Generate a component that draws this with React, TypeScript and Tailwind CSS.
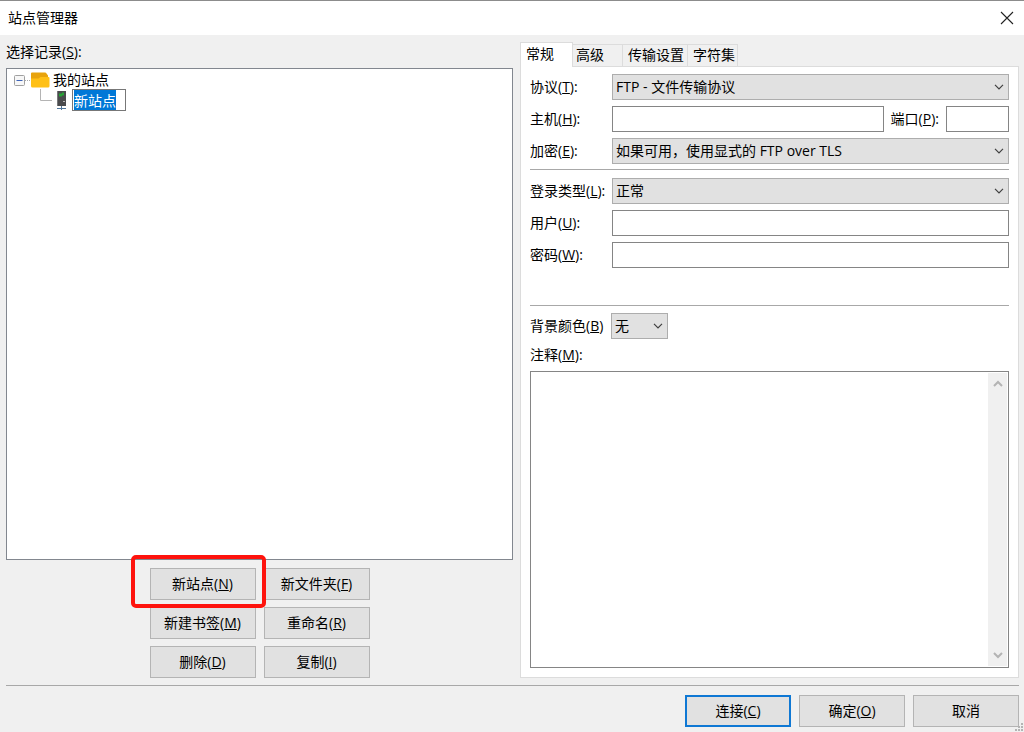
import { useEffect, useRef, useState } from "react";
import type { ReactNode } from "react";

function Key({ text, k, colon = false }: { text: string; k: string; colon?: boolean }) {
  return (
    <>
      {text}(<u className="underline underline-offset-1">{k}</u>){colon ? ":" : ""}
    </>
  );
}

function PushButton({ children, primary = false }: { children: ReactNode; primary?: boolean }) {
  return (
    <button
      type="button"
      className={
        primary
          ? "h-8 w-[106px] border-2 border-[#0f78d4] bg-[#e1e1e1]"
          : "h-8 w-[106px] border border-[#b4b4b4] bg-[#e1e1e1]"
      }
    >
      {children}
    </button>
  );
}

function Combo({ id, options, className }: { id: string; options: string[]; className: string }) {
  return (
    <div className={`relative ${className}`}>
      <select
        id={id}
        className="block h-[26px] w-full appearance-none border border-[#adadad] bg-[#e1e1e1] pl-[3px] leading-5"
      >
        {options.map((o) => (
          <option key={o}>{o}</option>
        ))}
      </select>
      <svg
        viewBox="0 0 10 6"
        className="pointer-events-none absolute top-[10px] right-[5px] h-[6px] w-[10px]"
        fill="none"
        stroke="#404040"
        strokeWidth="1.2"
      >
        <path d="M1 0.8 5 4.8 9 0.8" />
      </svg>
    </div>
  );
}

function Row({ id, label, k, children }: { id: string; label: string; k: string; children: ReactNode }) {
  return (
    <div className="flex h-[26px] items-center">
      <label htmlFor={id} className="w-[82px] shrink-0 pb-px whitespace-nowrap">
        <Key text={label} k={k} colon />
      </label>
      {children}
    </div>
  );
}

const field = "h-[26px] min-w-0 border border-[#858585] bg-white px-1 outline-none";

function SiteTree() {
  const [name, setName] = useState("新站点");
  const edit = useRef<HTMLInputElement>(null);
  useEffect(() => {
    edit.current?.focus();
    edit.current?.select();
  }, []);
  return (
    <div className="flex-1 border border-[#82878f] bg-white" role="tree" aria-label="选择记录">
      <div role="treeitem" aria-expanded="true" className="flex h-5 items-center pl-[7px]">
        <svg viewBox="0 0 17 20" className="h-5 w-[17px] shrink-0" fill="none">
          <rect x="0.5" y="6.5" width="10" height="10" rx="1" fill="#f7f7f7" stroke="#a0a0a0" />
          <path d="M2.5 11.5h6" stroke="#3d63b8" />
          <path d="M11 11.5h6" stroke="#a8a8a8" strokeDasharray="1 1" />
        </svg>
        <svg viewBox="0 0 19 16" className="mt-[2px] h-4 w-[19px] shrink-0">
          <path d="M0 1.5Q0 0.5 1 0.5H14Q15 0.5 15.5 1.5L17 3.5V13H0Z" fill="#e8a30c" />
          <path d="M0 6.5H7.5L9.5 5H17.5Q18.5 5 18.5 6V14Q18.5 15.5 17 15.5H1.5Q0 15.5 0 14Z" fill="#ffc016" />
        </svg>
        <span className="pt-[2px] pl-[3px]">我的站点</span>
      </div>
      <div role="treeitem" className="flex h-[22px] items-center pl-[33px]">
        <svg viewBox="0 0 12 22" className="h-[22px] w-3 shrink-0" fill="none" stroke="#b4b4b4">
          <path d="M0.5 0V11.5H12" />
        </svg>
        <svg viewBox="0 0 12 20" className="ml-[3px] h-5 w-3 shrink-0">
          <rect x="2" y="1" width="9" height="15" fill="#4a4b4d" />
          <rect x="2" y="1" width="1" height="15" fill="#77797b" />
          <path d="M4 3.5h3v-1h2v3h-2v1h-3z" fill="#27a336" />
          <rect x="8" y="11" width="2" height="1" fill="#b8b8b8" />
          <path d="M6.5 16v4M2 18.5h9" stroke="#50779c" />
        </svg>
        <input
          ref={edit}
          aria-label="站点名称"
          value={name}
          onChange={(e) => setName(e.target.value)}
          className="ml-[5px] h-[22px] w-[54px] border border-[#777] bg-white pb-px pl-px leading-5 outline-none selection:bg-[#0078d7] selection:text-white"
        />
      </div>
    </div>
  );
}

const idleTab = "h-[22px] border-t border-r border-[#dcdcdc] bg-[#f0f0f0] pb-px text-left";

function Tabs() {
  return (
    <div role="tablist" className="flex h-6 items-end">
      <button
        type="button"
        role="tab"
        aria-selected="true"
        className="relative -mb-px h-[25px] w-[53px] border border-b-0 border-[#dcdcdc] bg-white pb-[2px] pl-[5px] text-left"
      >
        常规
      </button>
      <button type="button" role="tab" className={`${idleTab} w-[50px] pl-[3px]`}>
        高级
      </button>
      <button type="button" role="tab" className={`${idleTab} w-[65px] pl-[5px]`}>
        传输设置
      </button>
      <button type="button" role="tab" className={`${idleTab} w-[50px] pl-[5px]`}>
        字符集
      </button>
    </div>
  );
}

function ScrollArrow({ down = false }: { down?: boolean }) {
  return (
    <svg viewBox="0 0 10 7" className="h-[7px] w-[10px]" fill="none" stroke="#b4b4b4" strokeWidth="2">
      <path d={down ? "M1 1 5 5 9 1" : "M1 6 5 2 9 6"} />
    </svg>
  );
}

export default function App() {
  return (
    <div className="flex min-h-screen flex-col bg-[#f0f0f0] font-['Open_Sans','Noto_Sans_CJK_SC',sans-serif] text-[14px] leading-5 text-black">
      <header className="flex h-[35px] items-center justify-between border-t border-[#8c8c8c] bg-white pr-[10px] pb-px pl-2">
        <h1>站点管理器</h1>
        <button type="button" aria-label="关闭">
          <svg viewBox="0 0 14 14" className="size-[14px]" fill="none" stroke="#222" strokeWidth="1.1">
            <path d="M1 1 13 13M13 1 1 13" />
          </svg>
        </button>
      </header>

      <main className="flex flex-1 gap-[7px] px-[6px] pt-[7px] pb-[7px] pr-[5px]">
        <section className="flex flex-1 flex-col">
          <p className="h-[26px]">
            <Key text="选择记录" k="S" colon />
          </p>
          <SiteTree />
          <div className="grid grid-cols-[106px_106px] justify-center gap-x-2 gap-y-[7px] pt-2">
            <div className="relative">
              <PushButton>
                <Key text="新站点" k="N" />
              </PushButton>
              <div className="pointer-events-none absolute -top-[13px] -left-[19px] z-10 h-[53px] w-[135px] rounded-[5px] border-4 border-[#fe130d]" />
            </div>
            <PushButton>
              <Key text="新文件夹" k="F" />
            </PushButton>
            <PushButton>
              <Key text="新建书签" k="M" />
            </PushButton>
            <PushButton>
              <Key text="重命名" k="R" />
            </PushButton>
            <PushButton>
              <Key text="删除" k="D" />
            </PushButton>
            <PushButton>
              <Key text="复制" k="I" />
            </PushButton>
          </div>
        </section>

        <section className="flex w-[499px] flex-col">
          <Tabs />
          <div className="flex flex-1 flex-col border border-[#dcdcdc] bg-white px-[9px] pt-[7px] pb-[9px]">
            <div className="flex flex-col gap-[6px]">
              <Row id="protocol" label="协议" k="T">
                <Combo id="protocol" className="flex-1" options={["FTP - 文件传输协议"]} />
              </Row>
              <Row id="host" label="主机" k="H">
                <input id="host" className={`${field} flex-1`} />
                <label htmlFor="port" className="px-[7px] pb-px">
                  <Key text="端口" k="P" colon />
                </label>
                <input id="port" className={`${field} w-[63px]`} />
              </Row>
              <Row id="encryption" label="加密" k="E">
                <Combo id="encryption" className="flex-1" options={["如果可用，使用显式的 FTP over TLS"]} />
              </Row>
            </div>
            <hr className="mt-[5px] mb-2 border-[#a8a8a8]" />
            <div className="flex flex-col gap-[6px]">
              <Row id="logon" label="登录类型" k="L">
                <Combo id="logon" className="flex-1" options={["正常"]} />
              </Row>
              <Row id="user" label="用户" k="U">
                <input id="user" className={`${field} flex-1`} />
              </Row>
              <Row id="password" label="密码" k="W">
                <input id="password" type="password" className={`${field} flex-1`} />
              </Row>
            </div>
            <hr className="mt-[37px] mb-[7px] border-[#a8a8a8]" />
            <div className="flex h-[26px] items-center">
              <label htmlFor="color" className="w-[81px] pb-px whitespace-nowrap">
                <Key text="背景颜色" k="B" />
              </label>
              <Combo id="color" className="w-[57px]" options={["无"]} />
            </div>
            <label htmlFor="notes" className="my-[6px]">
              <Key text="注释" k="M" colon />
            </label>
            <div className="flex flex-1 border border-[#858585] bg-white p-px">
              <textarea id="notes" className="flex-1 resize-none px-1 outline-none" />
              <div className="flex w-[19px] flex-col items-center justify-between bg-[#f0f0f0] py-[7px]">
                <ScrollArrow />
                <ScrollArrow down />
              </div>
            </div>
          </div>
        </section>
      </main>

      <footer className="relative px-[6px] pr-[5px] pb-[5px]">
        <div className="flex justify-end gap-2 border-t border-[#a8a8a8] pt-[9px]">
          <PushButton primary>
            <Key text="连接" k="C" />
          </PushButton>
          <PushButton>
            <Key text="确定" k="O" />
          </PushButton>
          <PushButton>取消</PushButton>
        </div>
        <svg viewBox="0 0 10 10" className="absolute right-0 bottom-0 size-[10px]" fill="#b4b4b4">
          <path d="M7 1h2v2h-2zM4 4h2v2h-2zM7 4h2v2h-2zM1 7h2v2h-2zM4 7h2v2h-2zM7 7h2v2h-2z" />
        </svg>
      </footer>
    </div>
  );
}
